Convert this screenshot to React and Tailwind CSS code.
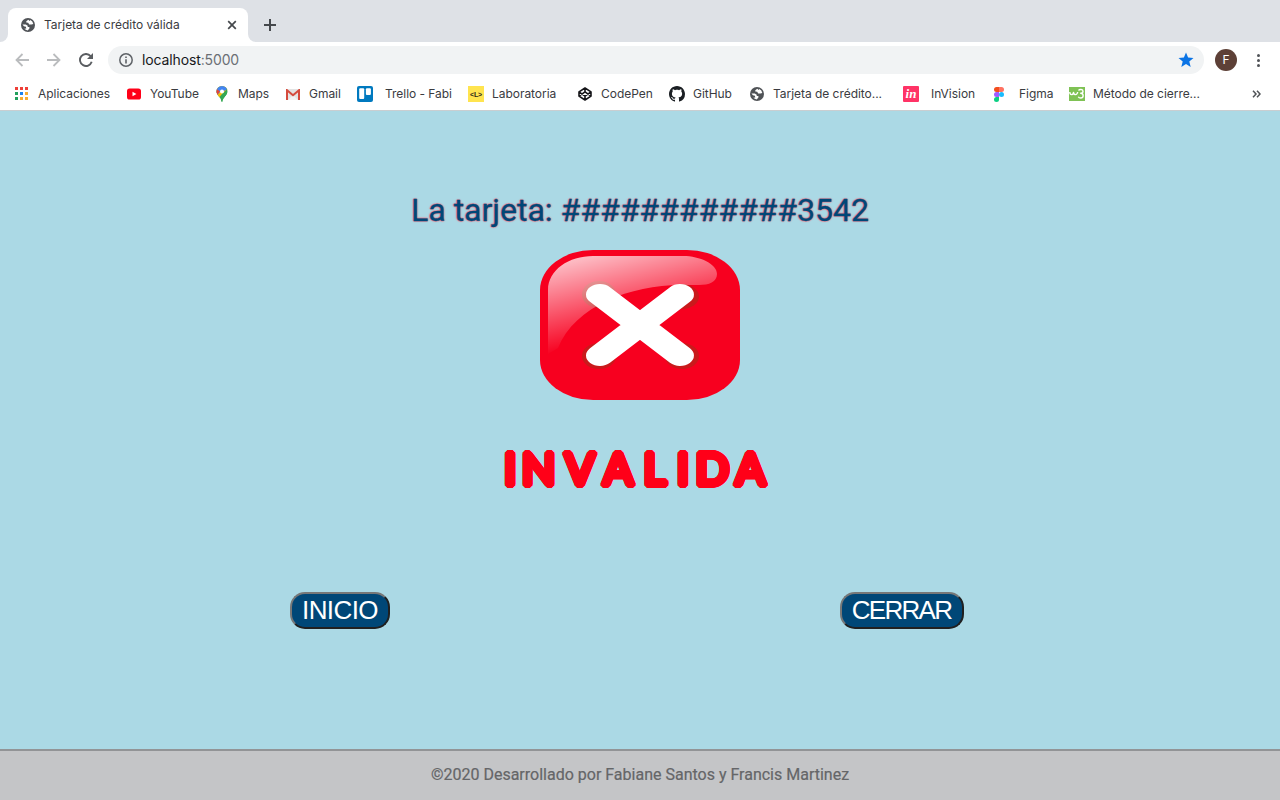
import React from 'react';

const Globe = () => (
  <svg width="14" height="14" viewBox="0 0 14 14">
    <circle cx="7" cy="7" r="7" fill="#505357" />
    <path d="M7.2 1.6 5.2 3.1v1.4l1.9.2 1 1.6h2.2l1.9-.4a5.4 5.4 0 0 0-3-3.9L8.6 3 7.2 1.6Z" fill="#fff" transform="translate(.1 .1)" />
    <path d="M1.5 6.4h3.3l1.9 1.3v1.2h1.7v1.5L6.7 12.4a5.5 5.5 0 0 1-3.4-1.6l2-.3-.4-1.7-2-.5-1.4-1.9Z" fill="#fff" />
  </svg>
);
const Apps = () => (
  <svg className="-mt-px" width="13" height="13" viewBox="0 0 13 13" shapeRendering="crispEdges">
    <path d="M0 0h3v3H0zM5 0h3v3H5zM10 0h3v3h-3z" fill="#ee4038" />
    <path d="M0 5h3v3H0zM0 10h3v3H0z" fill="#22a05c" />
    <path d="M5 5h3v3H5z" fill="#1a82f0" />
    <path d="M10 5h3v3h-3zM5 10h3v3H5zM10 10h3v3h-3z" fill="#f8ac32" />
  </svg>
);
const YouTube = () => (
  <svg width="14" height="12" viewBox="0 0 14 12">
    <rect y=".5" width="14" height="11" rx="2.6" fill="#ff0018" />
    <path d="M5.5 3.8v4.4L9.4 6z" fill="#fff" />
  </svg>
);
const Maps = () => (
  <svg width="12" height="16" viewBox="0 0 12 16">
    <defs>
      <clipPath id="pin"><path d="M6 0a5.5 5.5 0 0 0-5.5 5.5C.5 9.3 5 11.3 5.4 15.2c.1.9 1.1.9 1.2 0C7 11.300 11.500 9.300 11.500 5.500A5.500 5.500 0 0 0 6 0Z" /></clipPath>
    </defs>
    <g clipPath="url(#pin)">
      <path d="M0 0h12v16H0z" fill="#34a853" />
      <path d="M0 0h12v4L7 7 2 12 0 10z" fill="#fbbc04" />
      <path d="M0 0h12v3L6 6 1 9 0 7z" fill="#4285f4" />
      <path d="M0 2.500 4 5.500 1 9 0 8z" fill="#ea4335" />
      <path d="M11 3v5L5 16V12L1.500 9.500 4.500 6 7 7.500z" fill="#34a853" />
      <path d="M1 9.500 4.500 5.500 6.500 7.500 3 11.500z" fill="#fbbc04" />
    </g>
    <circle cx="6" cy="5.500" r="2" fill="#fff" />
  </svg>
);
const Gmail = () => (
  <svg width="14" height="11" viewBox="0 0 14 11">
    <rect width="14" height="11" rx="1" fill="#e3e3e3" />
    <path d="m2 11 5-5 5 5z" fill="#f4f4f4" />
    <path d="M1 11V1.200l6 5 6-5V11" fill="none" stroke="#d54b3d" strokeWidth="2" />
  </svg>
);
const Trello = () => (
  <svg width="16" height="16" viewBox="0 0 16 16">
    <rect width="16" height="16" rx="2" fill="#0079bf" />
    <rect x="2.200" y="2.300" width="5" height="10.800" rx="1" fill="#fff" />
    <rect x="8.900" y="2.300" width="5" height="6.700" rx="1" fill="#fff" />
  </svg>
);
const Laboratoria = () => (
  <span className="flex h-4 w-4 items-center justify-center bg-[#ffe44f] font-['Liberation_Sans',sans-serif] text-[7px] font-bold leading-none tracking-[-0.2px] text-[#292616]">&lt;L&gt;</span>
);
const CodePen = () => (
  <svg width="14" height="14" viewBox="0 0 14 14" fill="none" stroke="#151518" strokeWidth="1.600" strokeLinejoin="round">
    <path d="M7 1 13 4.900v4.200L7 13 1 9.100V4.900zM1 4.900l6 4.200 6-4.200M1 9.100l6-4.200 6 4.200M7 1v3.900M7 9.100V13" />
  </svg>
);
const GitHub = () => (
  <svg width="16" height="16" viewBox="0 0 16 16">
    <path fill="#1b1f23" d="M8 0C3.580 0 0 3.580 0 8c0 3.540 2.290 6.530 5.470 7.590.4.070.55-.17.55-.38 0-.19-.01-.82-.01-1.490-2.010.37-2.530-.49-2.690-.94-.09-.23-.48-.94-.82-1.130-.28-.15-.68-.52-.01-.53.63-.01 1.080.58 1.230.82.72 1.210 1.870.87 2.330.66.07-.52.28-.87.51-1.070-1.780-.2-3.640-.89-3.640-3.950 0-.87.31-1.590.82-2.150-.08-.2-.36-1.020.08-2.120 0 0 .67-.21 2.200.82.64-.18 1.320-.27 2-.27s1.360.09 2 .27c1.530-1.040 2.200-.82 2.200-.82.44 1.100.16 1.920.08 2.120.51.56.82 1.270.82 2.150 0 3.070-1.870 3.750-3.650 3.950.29.25.54.73.54 1.480 0 1.070-.01 1.930-.01 2.200 0 .21.15.46.55.38A8.010 8.010 0 0 0 16 8c0-4.420-3.580-8-8-8Z" />
  </svg>
);
const InVision = () => (
  <span className="flex h-4 w-4 items-center justify-center rounded-[1px] bg-[#ff3366] pb-[2px] font-['Liberation_Serif',serif] text-[13px] font-bold italic leading-none text-white">in</span>
);
const Figma = () => (
  <svg width="10" height="15" viewBox="0 0 10 15">
    <path d="M5 0H2.500a2.500 2.500 0 0 0 0 5H5z" fill="#f24e1e" />
    <path d="M5 0h2.500a2.500 2.500 0 0 1 0 5H5z" fill="#ff7262" />
    <path d="M5 5H2.500a2.500 2.500 0 0 0 0 5H5z" fill="#a259ff" />
    <circle cx="7.500" cy="7.500" r="2.500" fill="#1abcfe" />
    <path d="M5 10H2.500A2.500 2.500 0 1 0 5 12.500z" fill="#0acf83" />
  </svg>
);
const W3 = () => (
  <svg width="16" height="14" viewBox="0 0 16 14">
    <path d="M0 0h16v14H0z" fill="#7fc255" />
    <path d="M.8 5c.2 3.400 3.200 3.400 3.700.4.400 3 3.600 3 4.200-.4M9.500 3.500c1-1.600 4.500-1.300 4.500.8 0 1.500-1.200 2-2.300 2 3.300.1 3.200 4.700 0 4.700-1.200 0-2-.5-2.400-1.300" fill="none" stroke="#fff" strokeWidth="1.400" strokeLinejoin="round" />
  </svg>
);

const bookmarks = [
  { Icon: Apps, label: 'Aplicaciones', box: 'w-[112px]', icon: 'w-[23px]' },
  { Icon: YouTube, label: 'YouTube', box: 'w-[89px]', icon: 'w-[23px]' },
  { Icon: Maps, label: 'Maps', box: 'w-[70px]', icon: 'w-[22px]' },
  { Icon: Gmail, label: 'Gmail', box: 'w-[71px]', icon: 'w-[23px]' },
  { Icon: Trello, label: 'Trello - Fabi', box: 'w-[111px]', icon: 'w-[28px]' },
  { Icon: Laboratoria, label: 'Laboratoria', box: 'w-[110px]', icon: 'w-[24px]' },
  { Icon: CodePen, label: 'CodePen', box: 'w-[91px]', icon: 'w-[23px]' },
  { Icon: GitHub, label: 'GitHub', box: 'w-[81px]', icon: 'w-[24px]' },
  { Icon: Globe, label: 'Tarjeta de crédito...', box: 'w-[153px]', icon: 'w-[23px]' },
  { Icon: InVision, label: 'InVision', box: 'w-[91px]', icon: 'w-[28px]' },
  { Icon: Figma, label: 'Figma', box: 'w-[75px]', icon: 'w-[25px]' },
  { Icon: W3, label: 'Método de cierre...', box: 'w-[183px]', icon: 'w-[24px]' },
];

function Browser() {
  return (
    <header className="flex h-[111px] shrink-0 flex-col border-b border-[#c9ced1] bg-white font-[Inter,sans-serif] text-[#3a3b3f]">
      <div className="flex h-[42px] bg-[#dee1e6]">
        <div className="flex w-2 items-end bg-white"><div className="h-full w-2 rounded-br-lg bg-[#dee1e6]" /></div>
        <div className="flex w-60 bg-[#dee1e6] pt-2">
          <div className="flex h-[34px] w-60 items-center rounded-t-lg bg-white pl-[13px] pr-[11px]">
            <Globe />
            <span className="ml-[9px] flex-1 whitespace-nowrap text-[12px] tracking-[-0.02px]">Tarjeta de crédito válida</span>
            <svg width="10" height="10" viewBox="0 0 10 10" stroke="#45484c" strokeWidth="1.700"><path d="m1.200 1.200 7.600 7.600m0-7.600L1.200 8.800" /></svg>
          </div>
        </div>
        <div className="flex flex-1 bg-white">
          <div className="flex flex-1 items-center rounded-bl-lg bg-[#dee1e6] pl-[16px] pt-2">
            <svg width="12" height="12" viewBox="0 0 12 12" stroke="#45484c" strokeWidth="2"><path d="M6 0v12M0 6h12" /></svg>
          </div>
        </div>
      </div>
      <div className="flex h-9 items-center pl-[15px]">
        <svg width="14" height="14" viewBox="0 0 14 14" fill="none" stroke="#babcbe" strokeWidth="1.800"><path d="M14 7H1.500M7.500 1 1.500 7l6 6" /></svg>
        <svg className="ml-[18px]" width="14" height="14" viewBox="0 0 14 14" fill="none" stroke="#babcbe" strokeWidth="1.800"><path d="M0 7h12.500M6.500 1l6 6-6 6" /></svg>
        <svg className="ml-[18px]" width="14" height="14" viewBox="0 0 14 14"><path d="M11.600 3.100A6 6 0 1 0 12.700 8.800" fill="none" stroke="#5a5d61" strokeWidth="1.900" /><path d="M14 0v6H8z" fill="#5a5d61" /></svg>
        <div className="ml-[15px] flex h-7 w-[1096px] items-center rounded-full bg-[#f1f3f4] pl-[11px] pr-[10px]">
          <svg width="14" height="14" viewBox="0 0 14 14"><circle cx="7" cy="7" r="6.200" fill="none" stroke="#5f6368" strokeWidth="1.500" /><path d="M6.200 6.200h1.600v4.300H6.200zM6.200 3.500h1.600v1.600H6.200z" fill="#5f6368" /></svg>
          <span className="ml-[9px] flex-1 pb-[2px] text-[14px] tracking-[-0.13px] text-[#17181b]">localhost<span className="text-[#6b6f74]">:5000</span></span>
          <svg width="16" height="16" viewBox="0 0 16 16"><path d="m8 .5 2.100 5.100 5.400.4-4.200 3.600 1.400 5.300L8 12l-4.700 2.900 1.400-5.300L.5 6l5.400-.4z" fill="#0b74e5" /></svg>
        </div>
        <div className="ml-[11px] flex h-[22px] w-[22px] items-center justify-center rounded-full bg-[#5d4037] text-[12px] text-white">F</div>
        <svg className="ml-[20px]" width="3" height="13" viewBox="0 0 3 13" fill="#505357"><circle cx="1.500" cy="1.500" r="1.500" /><circle cx="1.500" cy="6.500" r="1.500" /><circle cx="1.500" cy="11.500" r="1.500" /></svg>
      </div>
      <nav className="flex h-8 items-center pl-[15px] text-[12px] tracking-[-0.04px]">
        {bookmarks.map(({ Icon, label, box, icon }) => (
          <div key={label} className={`flex shrink-0 items-center ${box}`}>
            <span className={`flex shrink-0 ${icon}`}><Icon /></span>
            <span className="whitespace-nowrap">{label}</span>
          </div>
        ))}
        <svg width="9" height="8" viewBox="0 0 9 8" fill="none" stroke="#505357" strokeWidth="1.500"><path d="m1 .8 3 3.200-3 3.200M5 .8 8 4 5 7.200" /></svg>
      </nav>
    </header>
  );
}

const InvalidMark = () => (
  <svg className="shrink-0" width="200" height="150" viewBox="0 0 200 150">
    <defs>
      <linearGradient id="gloss" gradientUnits="userSpaceOnUse" x1="30" y1="-4" x2="54" y2="94">
        <stop offset="0" stopColor="#fff" stopOpacity=".86" />
        <stop offset="1" stopColor="#fff" stopOpacity="0" />
      </linearGradient>
    </defs>
    <rect width="200" height="150" rx="53" ry="40" fill="#f7001f" />
    <g fill="#c91a1c">
      <ellipse cx="59" cy="44.500" rx="17" ry="13.500" />
      <ellipse cx="142" cy="46.500" rx="17" ry="12.500" />
      <ellipse cx="59" cy="106" rx="17" ry="13" />
      <ellipse cx="142" cy="106" rx="17" ry="13" />
    </g>
    <path d="M8 100V40C8 20 29 6 53 6h90c17 0 34 8 34 18 0 8-8 11-18 11h-15C94 34 35 55 18 98l-10 6Z" fill="url(#gloss)" />
    <g stroke="#fff" strokeWidth="21" strokeLinecap="round" transform="scale(1.333 1)">
      <path d="m45 44.500 60 61M105 44.500l-60 61" />
    </g>
  </svg>
);

export default function App() {
  return (
    <div className="flex h-[800px] w-[1280px] flex-col overflow-hidden bg-[#abd9e5]">
      <Browser />
      <main className="flex flex-1 flex-col items-center">
        <h1 className="mt-[80px] h-[38px] whitespace-nowrap font-[Roboto,sans-serif] text-[32px] font-normal leading-[38px] text-[#004777] [-webkit-text-stroke:0.3px_#004777] [text-shadow:1px_0_1px_#ff607080,-1px_0_1px_#ff607080,0_1px_1px_#ff607080,0_-1px_1px_#ff607080]">La tarjeta: ############3542</h1>
        <div className="mt-[21px] flex"><InvalidMark /></div>
        <h2 className="mb-px mt-[42px] h-[52px] w-[290px] whitespace-nowrap pl-[9px] font-[Lato,sans-serif] text-[44px] font-normal leading-[52px] text-[#ff0018] [-webkit-text-stroke:1px_#ff0018] [font-kerning:none] [text-shadow:3px_0_#ff0018,-3px_0_#ff0018,0_3px_#ff0018,0_-3px_#ff0018,3px_1px_#ff0018,-3px_1px_#ff0018,3px_-1px_#ff0018,-3px_-1px_#ff0018,1px_3px_#ff0018,-1px_3px_#ff0018,1px_-3px_#ff0018,-1px_-3px_#ff0018,2px_2px_#ff0018,-2px_2px_#ff0018,2px_-2px_#ff0018,-2px_-2px_#ff0018]"><span className="tracking-[5.5px]">I</span><span className="tracking-[9.5px]">N</span><span className="tracking-[8.5px]">V</span><span className="tracking-[10.5px]">AL</span><span className="tracking-[6.5px]">IDA</span></h2>
        <div className="mt-[97px] flex w-[1280px] justify-between pl-[290px] pr-[316px] font-['Liberation_Sans',sans-serif] text-[26px] text-white">
          <button className="flex h-[37px] w-[100px] items-center justify-center rounded-[15px] border-2 border-b-[#202020] border-l-[#777] border-r-[#202020] border-t-[#777] bg-[#004777] tracking-[-0.6px]">INICIO</button>
          <button className="flex h-[37px] w-[124px] items-center justify-center rounded-[15px] border-2 border-b-[#202020] border-l-[#777] border-r-[#202020] border-t-[#777] bg-[#004777] pr-px tracking-[-1.7px]">CERRAR</button>
        </div>
      </main>
      <footer className="flex h-[51px] shrink-0 items-center justify-center border-t-2 border-[#929496] bg-[#c4c5c7] pb-[2px] font-[Roboto,sans-serif] text-[16px] text-[#656668] [-webkit-text-stroke:0.2px_#656668]">©2020 Desarrollado por Fabiane Santos y Francis Martinez</footer>
    </div>
  );
}
